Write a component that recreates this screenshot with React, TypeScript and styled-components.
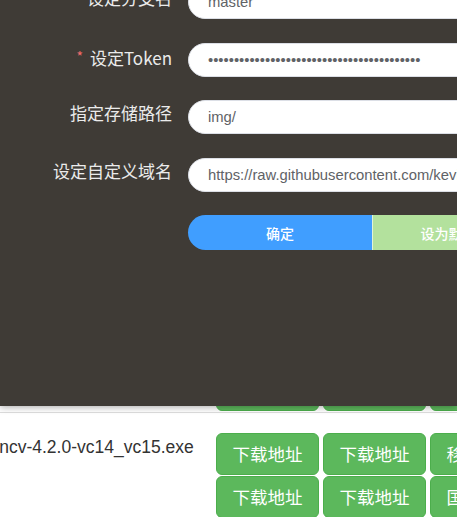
import React from "react";
import styled, { createGlobalStyle } from "styled-components";

const Global = createGlobalStyle`
  html, body { margin: 0; padding: 0; background: #fff; overflow: hidden; }
  body { font-family: "Liberation Sans", Arial, "Noto Sans CJK SC", sans-serif; }
  * { box-sizing: border-box; }
`;

const Page = styled.div`
  position: relative;
  width: 457px;
  height: 517px;
  overflow: hidden;
`;

const Table = styled.div`
  padding-top: 305px;
  margin-left: -30px;
  width: 800px;
`;

const Row = styled.div`
  display: flex;
  border-top: 1px solid #dddddd;
  padding: 20px 0 1px 0;
`;

const NameCell = styled.div`
  width: 246px;
  flex: none;
  font-family: "Liberation Sans", Arial, sans-serif;
  font-size: 17.5px;
  line-height: 25px;
  color: #333;
  padding-top: 2px;
`;

const ButtonGrid = styled.div`
  display: grid;
  grid-template-columns: repeat(3, 103px);
  grid-auto-rows: 42px;
  column-gap: 4px;
  row-gap: 1px;
`;

const GreenBtn = styled.div`
  display: flex;
  align-items: center;
  justify-content: center;
  background: #5cb85c;
  border: 1px solid #4cae4c;
  border-radius: 6px;
  color: #fff;
  font-family: "Noto Sans CJK SC", sans-serif;
  font-size: 17.5px;
  line-height: 1;
  white-space: nowrap;
`;

const Overlay = styled.div`
  position: absolute;
  top: 0;
  left: 0;
  right: 0;
  height: 406px;
  background: #3f3b36;
  box-shadow: 0 1px 7px rgba(0, 0, 0, 0.35);
  z-index: 10;
`;

const Form = styled.div`
  margin-top: -15px;
  display: flex;
  flex-direction: column;
  gap: 23.5px;
`;

const FormRow = styled.div`
  display: flex;
  align-items: flex-start;
  gap: 16px;
`;

const Label = styled.div`
  width: 172px;
  flex: none;
  text-align: right;
  font-family: "Noto Sans CJK SC", sans-serif;
  font-size: 17px;
  line-height: 24px;
  padding-top: 1px;
  color: #ebebeb;
  white-space: nowrap;
`;

const Star = styled.span`
  color: #f56c6c;
  font-size: 14px;
  margin-right: 7px;
  vertical-align: 3px;
`;

const Input = styled.input`
  width: 420px;
  flex: none;
  height: 34px;
  border: 1px solid #dcdfe6;
  border-radius: 17px;
  background: #fff;
  padding: 0 19px;
  font-family: "Liberation Sans", Arial, sans-serif;
  font-size: 14.8px;
  color: #606266;
  outline: none;
`;

const Actions = styled.div`
  display: flex;
  margin-left: 188px;
`;

const ActionBtn = styled.div<{ $variant: "primary" | "success" }>`
  width: ${(p) => (p.$variant === "primary" ? "184px" : "152px")};
  flex: none;
  height: 35px;
  display: flex;
  align-items: center;
  justify-content: center;
  color: #fff;
  font-family: "Noto Sans CJK SC", sans-serif;
  font-size: 14px;
  font-weight: 500;
  white-space: nowrap;
  background: ${(p) => (p.$variant === "primary" ? "#409eff" : "#b3e19d")};
  border-radius: ${(p) => (p.$variant === "primary" ? "18px 0 0 18px" : "0")};
  border-left: ${(p) => (p.$variant === "success" ? "1px solid #e1f3d8" : "none")};
`;

const rows = [
  { name: "opencv-4.2.0-vc14_vc15.exe", third: ["移动地址", "国内地址"] },
  { name: "opencv-4.2.0-vc14_vc15.exe", third: ["移动地址", "国内地址"] },
];

export default function App() {
  return (
    <Page>
      <Global />
      <Table>
        {rows.map((r, i) => (
          <Row key={i}>
            <NameCell>{r.name}</NameCell>
            <ButtonGrid>
              <GreenBtn>下载地址</GreenBtn>
              <GreenBtn>下载地址</GreenBtn>
              <GreenBtn>{r.third[0]}</GreenBtn>
              <GreenBtn>下载地址</GreenBtn>
              <GreenBtn>下载地址</GreenBtn>
              <GreenBtn>{r.third[1]}</GreenBtn>
            </ButtonGrid>
          </Row>
        ))}
      </Table>
      <Overlay>
        <Form>
          <FormRow>
            <Label>设定分支名</Label>
            <Input readOnly value="master" />
          </FormRow>
          <FormRow>
            <Label>
              <Star>*</Star>设定Token
            </Label>
            <Input readOnly type="password" value="ghp_0123456789abcdefghijABCDEFGHIJklmnopq" />
          </FormRow>
          <FormRow>
            <Label>指定存储路径</Label>
            <Input readOnly value="img/" />
          </FormRow>
          <FormRow>
            <Label>设定自定义域名</Label>
            <Input readOnly value="https://raw.githubusercontent.com/kevin/images/master" />
          </FormRow>
          <Actions>
            <ActionBtn $variant="primary">确定</ActionBtn>
            <ActionBtn $variant="success">设为默认</ActionBtn>
          </Actions>
        </Form>
      </Overlay>
    </Page>
  );
}
